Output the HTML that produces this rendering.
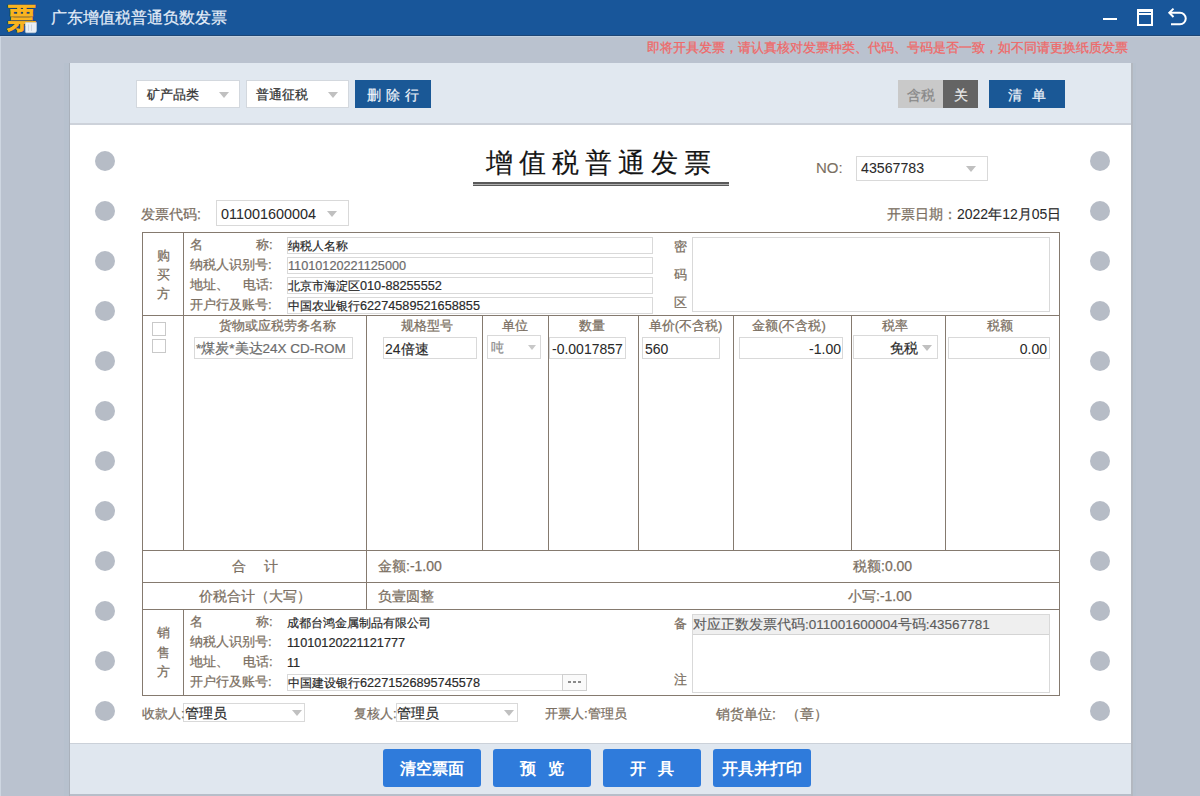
<!DOCTYPE html>
<html><head><meta charset="utf-8"><style>
*{margin:0;padding:0;box-sizing:border-box}
html,body{width:1200px;height:796px;overflow:hidden}
body{position:relative;background:#bac2cf;font-family:"Liberation Sans",sans-serif;color:#222}
.a{position:absolute;white-space:nowrap}
.tb{left:0;top:0;width:1200px;height:36px;background:#18569a;border-bottom:1px solid #1d4676}
.panel{left:70px;top:63px;width:1061px;height:733px;background:#fff}
.tool{left:70px;top:63px;width:1061px;height:62px;background:#e1e8f0;border-bottom:2px solid #cdd2da}
.bbar{left:70px;top:743px;width:1061px;height:53px;background:#e0e7ef;border-top:1px solid #cbd1d9;border-bottom:2px solid #b7bec9}
.dot{width:20px;height:20px;border-radius:50%;background:#b6bcc6}
.lbl{color:#7b6f62;font-size:13px;line-height:16px;-webkit-text-stroke:0.25px #7b6f62}
.val{color:#2a2a2a;font-size:12px;line-height:16px;-webkit-text-stroke:0.2px #2a2a2a}
.v14{-webkit-text-stroke:0.05px #2a2a2a}
.d{font-size:12.7px}
.ln{background:#857a6f}
.inp{border:1px solid #d9d9d9;background:#fff}
.arr{width:0;height:0;border-left:5px solid transparent;border-right:5px solid transparent;border-top:6px solid #c0c0c0}
.btnb{background:#1a5896;color:#f0f4fa;font-size:14px;line-height:30px;text-align:center;-webkit-text-stroke:0.2px #f0f4fa}
.bb{background:#2f7bdb;border-radius:3px;color:#fff;font-weight:bold;font-size:16px;line-height:40px;text-align:center;height:38px;width:98px;top:749px}
</style></head><body>
<div class="a tb"></div>
<div class="a" style="left:0;top:36px;width:1px;height:760px;background:#ced6e1"></div>
<div class="a" style="left:0;top:36px;width:1200px;height:1px;background:#c4d1e0"></div>
<div class="a" style="left:51px;top:10px;font-size:16px;line-height:16px;color:#e4edf8;-webkit-text-stroke:0.2px #e4edf8">广东增值税普通负数发票</div>
<div class="a" style="left:1103px;top:18px;width:14px;height:2px;background:#fff"></div>
<div class="a" style="left:1137px;top:9px;width:16px;height:17px;border:2px solid #fff;border-top-width:3px"></div>
<div class="a" style="left:1139px;top:13px;width:12px;height:2px;background:#fff"></div>
<svg class="a" style="left:1164px;top:4px" width="26" height="26" viewBox="0 0 26 26"><path d="M9.5 4.6 L5.3 8.8 L9.5 13" fill="none" stroke="#fff" stroke-width="2" stroke-linejoin="miter"/><path d="M5.5 8.8 H16 A5.75 5.75 0 0 1 16 20.3 H7" fill="none" stroke="#fff" stroke-width="2"/></svg>
<div class="a" style="left:7px;top:2px;font-size:29px;line-height:32px;font-weight:bold;color:#fbbb22;-webkit-text-stroke:0.5px #f9b420;text-shadow:0 0 1px #1a1000,0 0 1px #1a1000">票</div>
<svg class="a" style="left:6px;top:2px" width="34" height="34" viewBox="0 0 34 34">
<path d="M19.4 20.5 H30.5 V28.5 Q30.5 30.8 28.5 30.8 H20.5 Q19.4 30.8 19.4 29.5 Z" fill="#eaeff5" stroke="#c5ced9" stroke-width="0.6"/>
<path d="M22.5 22.5 V29 M25.5 22.5 V29" fill="none" stroke="#cdd5e0" stroke-width="1"/>
</svg>
<div class="a" style="left:647px;top:40px;font-size:13px;line-height:16px;color:#ee6a6a;-webkit-text-stroke:0.3px #ee6a6a">即将开具发票，请认真核对发票种类、代码、号码是否一致，如不同请更换纸质发票</div>
<div class="a" style="left:64px;top:63px;width:5px;height:733px;background:#b7c1ce"></div><div class="a" style="left:69px;top:63px;width:1px;height:733px;background:#aab1bb"></div><div class="a" style="left:1131px;top:63px;width:2px;height:733px;background:#b3b8c0"></div><div class="a" style="left:1133px;top:63px;width:3px;height:733px;background:#b7c1ce"></div>
<div class="a panel"></div><div class="a tool"></div><div class="a bbar"></div>
<div class="a inp" style="left:136px;top:80px;width:104px;height:28px;border-color:#d3d8de"></div>
<div class="a lbl" style="left:147px;top:87px;color:#333;-webkit-text-stroke:0.25px #333">矿产品类</div>
<div class="a arr" style="left:219px;top:92px"></div>
<div class="a inp" style="left:246px;top:80px;width:103px;height:28px;border-color:#d3d8de"></div>
<div class="a lbl" style="left:256px;top:87px;color:#333;-webkit-text-stroke:0.25px #333">普通征税</div>
<div class="a arr" style="left:328px;top:92px"></div>
<div class="a btnb" style="left:355px;top:80px;width:76px;height:28px;letter-spacing:5px;padding-left:5px">删除行</div>
<div class="a" style="left:898px;top:80px;width:45px;height:28px;background:#c9c9c9;color:#888;font-size:14px;line-height:30px;text-align:center;-webkit-text-stroke:0.25px #888">含税</div>
<div class="a" style="left:943px;top:80px;width:35px;height:28px;background:#646464;color:#eee;font-size:14px;line-height:30px;text-align:center;-webkit-text-stroke:0.2px #eee">关</div>
<div class="a btnb" style="left:989px;top:80px;width:76px;height:28px;letter-spacing:10px;padding-left:10px">清单</div>
<div class="a dot" style="left:95px;top:151px"></div>
<div class="a dot" style="left:1090px;top:151px"></div>
<div class="a dot" style="left:95px;top:201px"></div>
<div class="a dot" style="left:1090px;top:201px"></div>
<div class="a dot" style="left:95px;top:251px"></div>
<div class="a dot" style="left:1090px;top:251px"></div>
<div class="a dot" style="left:95px;top:301px"></div>
<div class="a dot" style="left:1090px;top:301px"></div>
<div class="a dot" style="left:95px;top:351px"></div>
<div class="a dot" style="left:1090px;top:351px"></div>
<div class="a dot" style="left:95px;top:401px"></div>
<div class="a dot" style="left:1090px;top:401px"></div>
<div class="a dot" style="left:95px;top:451px"></div>
<div class="a dot" style="left:1090px;top:451px"></div>
<div class="a dot" style="left:95px;top:501px"></div>
<div class="a dot" style="left:1090px;top:501px"></div>
<div class="a dot" style="left:95px;top:551px"></div>
<div class="a dot" style="left:1090px;top:551px"></div>
<div class="a dot" style="left:95px;top:601px"></div>
<div class="a dot" style="left:1090px;top:601px"></div>
<div class="a dot" style="left:95px;top:651px"></div>
<div class="a dot" style="left:1090px;top:651px"></div>
<div class="a dot" style="left:95px;top:701px"></div>
<div class="a dot" style="left:1090px;top:701px"></div>
<div class="a" style="left:486px;top:147px;font-size:27px;line-height:32px;letter-spacing:6px;color:#151515;-webkit-text-stroke:0.15px #151515">增值税普通发票</div>
<div class="a" style="left:473px;top:182px;width:256px;height:2px;background:#5a5a5a"></div>
<div class="a" style="left:473px;top:184px;width:256px;height:1px;background:#b0b0b0"></div>
<div class="a" style="left:473px;top:185px;width:256px;height:1px;background:#5a5a5a"></div>
<div class="a lbl" style="left:816px;top:160px;font-size:15px;-webkit-text-stroke:0.1px #7b6f62">NO:</div>
<div class="a inp" style="left:856px;top:156px;width:132px;height:25px"></div>
<div class="a val v14" style="left:861px;top:160px;font-size:14.2px">43567783</div>
<div class="a arr" style="left:966px;top:166px"></div>
<div class="a lbl" style="left:141px;top:206px;font-size:14px">发票代码:</div>
<div class="a inp" style="left:216px;top:200px;width:133px;height:26px"></div>
<div class="a val v14" style="left:221px;top:206px;font-size:14.4px">011001600004</div>
<div class="a arr" style="left:327px;top:211px"></div>
<div class="a lbl" style="left:887px;top:206px;font-size:14px">开票日期：</div>
<div class="a val" style="left:957px;top:206px;font-size:14px"><span class="v14">2022</span>年<span class="v14">12</span>月<span class="v14">05</span>日</div>
<div class="a ln" style="left:142px;top:232px;width:918px;height:1px"></div>
<div class="a ln" style="left:142px;top:232px;width:1px;height:464px"></div>
<div class="a ln" style="left:1059px;top:232px;width:1px;height:464px"></div>
<div class="a ln" style="left:142px;top:695px;width:918px;height:1px"></div>
<div class="a ln" style="left:142px;top:315px;width:918px;height:1px"></div>
<div class="a ln" style="left:142px;top:550px;width:918px;height:1px"></div>
<div class="a ln" style="left:142px;top:582px;width:918px;height:1px"></div>
<div class="a ln" style="left:142px;top:609px;width:918px;height:1px"></div>
<div class="a ln" style="left:183px;top:232px;width:1px;height:318px"></div>
<div class="a ln" style="left:183px;top:609px;width:1px;height:87px"></div>
<div class="a ln" style="left:366px;top:315px;width:1px;height:295px"></div>
<div class="a ln" style="left:482px;top:315px;width:1px;height:235px"></div>
<div class="a ln" style="left:548px;top:315px;width:1px;height:235px"></div>
<div class="a ln" style="left:638px;top:315px;width:1px;height:235px"></div>
<div class="a ln" style="left:733px;top:315px;width:1px;height:235px"></div>
<div class="a ln" style="left:851px;top:315px;width:1px;height:235px"></div>
<div class="a ln" style="left:945px;top:315px;width:1px;height:235px"></div>
<div class="a lbl" style="left:155px;top:246px;width:16px;line-height:19px;white-space:normal;text-align:center">购<br>买<br>方</div>
<div class="a lbl" style="left:190px;top:237px">名</div>
<div class="a lbl" style="left:256px;top:237px">称:</div>
<div class="a lbl" style="left:190px;top:257px">纳税人识别号:</div>
<div class="a lbl" style="left:190px;top:277px">地址、</div>
<div class="a lbl" style="left:243px;top:277px">电话:</div>
<div class="a lbl" style="left:190px;top:297px">开户行及账号:</div>
<div class="a inp" style="left:287px;top:237px;width:366px;height:17px"></div>
<div class="a inp" style="left:287px;top:257px;width:366px;height:17px"></div>
<div class="a inp" style="left:287px;top:277px;width:366px;height:17px"></div>
<div class="a inp" style="left:287px;top:297px;width:366px;height:17px"></div>
<div class="a val" style="left:288px;top:238px">纳税人名称</div>
<div class="a val" style="left:288px;top:258px;color:#6b6b6b;-webkit-text-stroke:0.2px #6b6b6b"><span class="d">11010120221125000</span></div>
<div class="a val" style="left:288px;top:278px">北京市海淀区<span class="d">010-88255552</span></div>
<div class="a val" style="left:288px;top:298px">中国农业银行<span class="d">62274589521658855</span></div>
<div class="a lbl" style="left:674px;top:239px">密</div>
<div class="a lbl" style="left:674px;top:267px">码</div>
<div class="a lbl" style="left:674px;top:295px">区</div>
<div class="a inp" style="left:692px;top:237px;width:358px;height:75px"></div>
<div class="a inp" style="left:152px;top:322px;width:14px;height:14px;border-color:#c9c9c9"></div>
<div class="a inp" style="left:152px;top:339px;width:14px;height:14px;border-color:#c9c9c9"></div>
<div class="a lbl" style="left:186px;top:318px;width:183px;text-align:center">货物或应税劳务名称</div>
<div class="a lbl" style="left:369px;top:318px;width:116px;text-align:center">规格型号</div>
<div class="a lbl" style="left:482px;top:318px;width:66px;text-align:center">单位</div>
<div class="a lbl" style="left:547px;top:318px;width:90px;text-align:center">数量</div>
<div class="a lbl" style="left:638px;top:318px;width:95px;text-align:center">单价(不含税)</div>
<div class="a lbl" style="left:730px;top:318px;width:118px;text-align:center">金额(不含税)</div>
<div class="a lbl" style="left:848px;top:318px;width:94px;text-align:center">税率</div>
<div class="a lbl" style="left:942px;top:318px;width:115px;text-align:center">税额</div>
<div class="a inp" style="left:194px;top:337px;width:159px;height:22px"></div>
<div class="a val" style="left:196px;top:341px;font-size:13.5px;color:#6b6b6b;-webkit-text-stroke:0.2px #6b6b6b">*煤炭*美达24X CD-ROM</div>
<div class="a inp" style="left:383px;top:337px;width:94px;height:22px"></div>
<div class="a val" style="left:385px;top:341px;font-size:14px"><span class="v14">24</span>倍速</div>
<div class="a inp" style="left:487px;top:335px;width:54px;height:24px"></div>
<div class="a val" style="left:491px;top:340px;font-size:13px;color:#8c8c8c;-webkit-text-stroke:0.2px #8c8c8c">吨</div>
<div class="a arr" style="left:528px;top:345px;border-left-width:4px;border-right-width:4px;border-top-width:5px;border-top-color:#c8c8c8"></div>
<div class="a inp" style="left:549px;top:337px;width:77px;height:22px"></div>
<div class="a val" style="left:552px;top:341px;font-size:14px"><span class="v14">-0.0017857</span></div>
<div class="a inp" style="left:642px;top:337px;width:78px;height:22px"></div>
<div class="a val" style="left:645px;top:341px;font-size:14px"><span class="v14">560</span></div>
<div class="a inp" style="left:739px;top:337px;width:104px;height:22px"></div>
<div class="a val" style="left:739px;top:341px;width:102px;text-align:right;font-size:14px"><span class="v14">-1.00</span></div>
<div class="a inp" style="left:853px;top:335px;width:85px;height:24px"></div>
<div class="a val" style="left:855px;top:340px;width:63px;text-align:right;font-size:14px">免税</div>
<div class="a arr" style="left:922px;top:345px"></div>
<div class="a inp" style="left:948px;top:337px;width:102px;height:22px"></div>
<div class="a val" style="left:948px;top:341px;width:99px;text-align:right;font-size:14px"><span class="v14">0.00</span></div>
<div class="a lbl" style="left:232px;top:558px;font-size:14px">合</div>
<div class="a lbl" style="left:264px;top:558px;font-size:14px">计</div>
<div class="a lbl" style="left:378px;top:558px;font-size:14px">金额:-1.00</div>
<div class="a lbl" style="left:853px;top:558px;font-size:14px">税额:0.00</div>
<div class="a lbl" style="left:199px;top:588px;font-size:14px">价税合计（大写）</div>
<div class="a lbl" style="left:378px;top:588px;font-size:14px">负壹圆整</div>
<div class="a lbl" style="left:848px;top:588px;font-size:14px">小写:-1.00</div>
<div class="a lbl" style="left:155px;top:623px;width:16px;line-height:19.5px;white-space:normal;text-align:center">销<br>售<br>方</div>
<div class="a lbl" style="left:190px;top:614px">名</div>
<div class="a lbl" style="left:256px;top:614px">称:</div>
<div class="a lbl" style="left:190px;top:634px">纳税人识别号:</div>
<div class="a lbl" style="left:190px;top:654px">地址、</div>
<div class="a lbl" style="left:243px;top:654px">电话:</div>
<div class="a lbl" style="left:190px;top:674px">开户行及账号:</div>
<div class="a val" style="left:287px;top:615px">成都台鸿金属制品有限公司</div>
<div class="a val" style="left:287px;top:635px"><span class="d">11010120221121777</span></div>
<div class="a val" style="left:287px;top:655px"><span class="d">11</span></div>
<div class="a inp" style="left:287px;top:674px;width:276px;height:17px"></div>
<div class="a val" style="left:288px;top:675px">中国建设银行<span class="d">62271526895745578</span></div>
<div class="a inp" style="left:562px;top:674px;width:25px;height:17px;background:#fafafa;border-color:#cfcfcf"></div>
<div class="a" style="left:568px;top:681px;width:3px;height:2px;background:#8a8a8a"></div>
<div class="a" style="left:573px;top:681px;width:3px;height:2px;background:#8a8a8a"></div>
<div class="a" style="left:578px;top:681px;width:3px;height:2px;background:#8a8a8a"></div>
<div class="a lbl" style="left:674px;top:616px">备</div>
<div class="a lbl" style="left:674px;top:672px">注</div>
<div class="a inp" style="left:692px;top:614px;width:358px;height:79px"></div>
<div class="a" style="left:693px;top:615px;width:356px;height:20px;background:#efefef;border-bottom:1px solid #d4d4d4"></div>
<div class="a val" style="left:693px;top:617px;font-size:13.5px;color:#5c5c5c;-webkit-text-stroke:0.15px #5c5c5c">对应正数发票代码:011001600004号码:43567781</div>
<div class="a lbl" style="left:142px;top:706px;font-size:13px;z-index:2">收款人:</div>
<div class="a inp" style="left:183px;top:703px;width:122px;height:19px"></div>
<div class="a val" style="left:185px;top:706px;font-size:13.5px">管理员</div>
<div class="a arr" style="left:292px;top:710px"></div>
<div class="a lbl" style="left:354px;top:706px;font-size:13px;z-index:2">复核人:</div>
<div class="a inp" style="left:396px;top:703px;width:122px;height:19px"></div>
<div class="a val" style="left:397px;top:706px;font-size:13.5px">管理员</div>
<div class="a arr" style="left:504px;top:710px"></div>
<div class="a lbl" style="left:545px;top:706px;font-size:13.3px">开票人:管理员</div>
<div class="a lbl" style="left:716px;top:706px;font-size:14px">销货单位:</div>
<div class="a lbl" style="left:786px;top:706px;font-size:14px">（章）</div>
<div class="a bb" style="left:383px">清空票面</div>
<div class="a bb" style="left:493px;letter-spacing:12px;padding-left:12px">预览</div>
<div class="a bb" style="left:603px;letter-spacing:12px;padding-left:12px">开具</div>
<div class="a bb" style="left:713px">开具并打印</div>
</body></html>
